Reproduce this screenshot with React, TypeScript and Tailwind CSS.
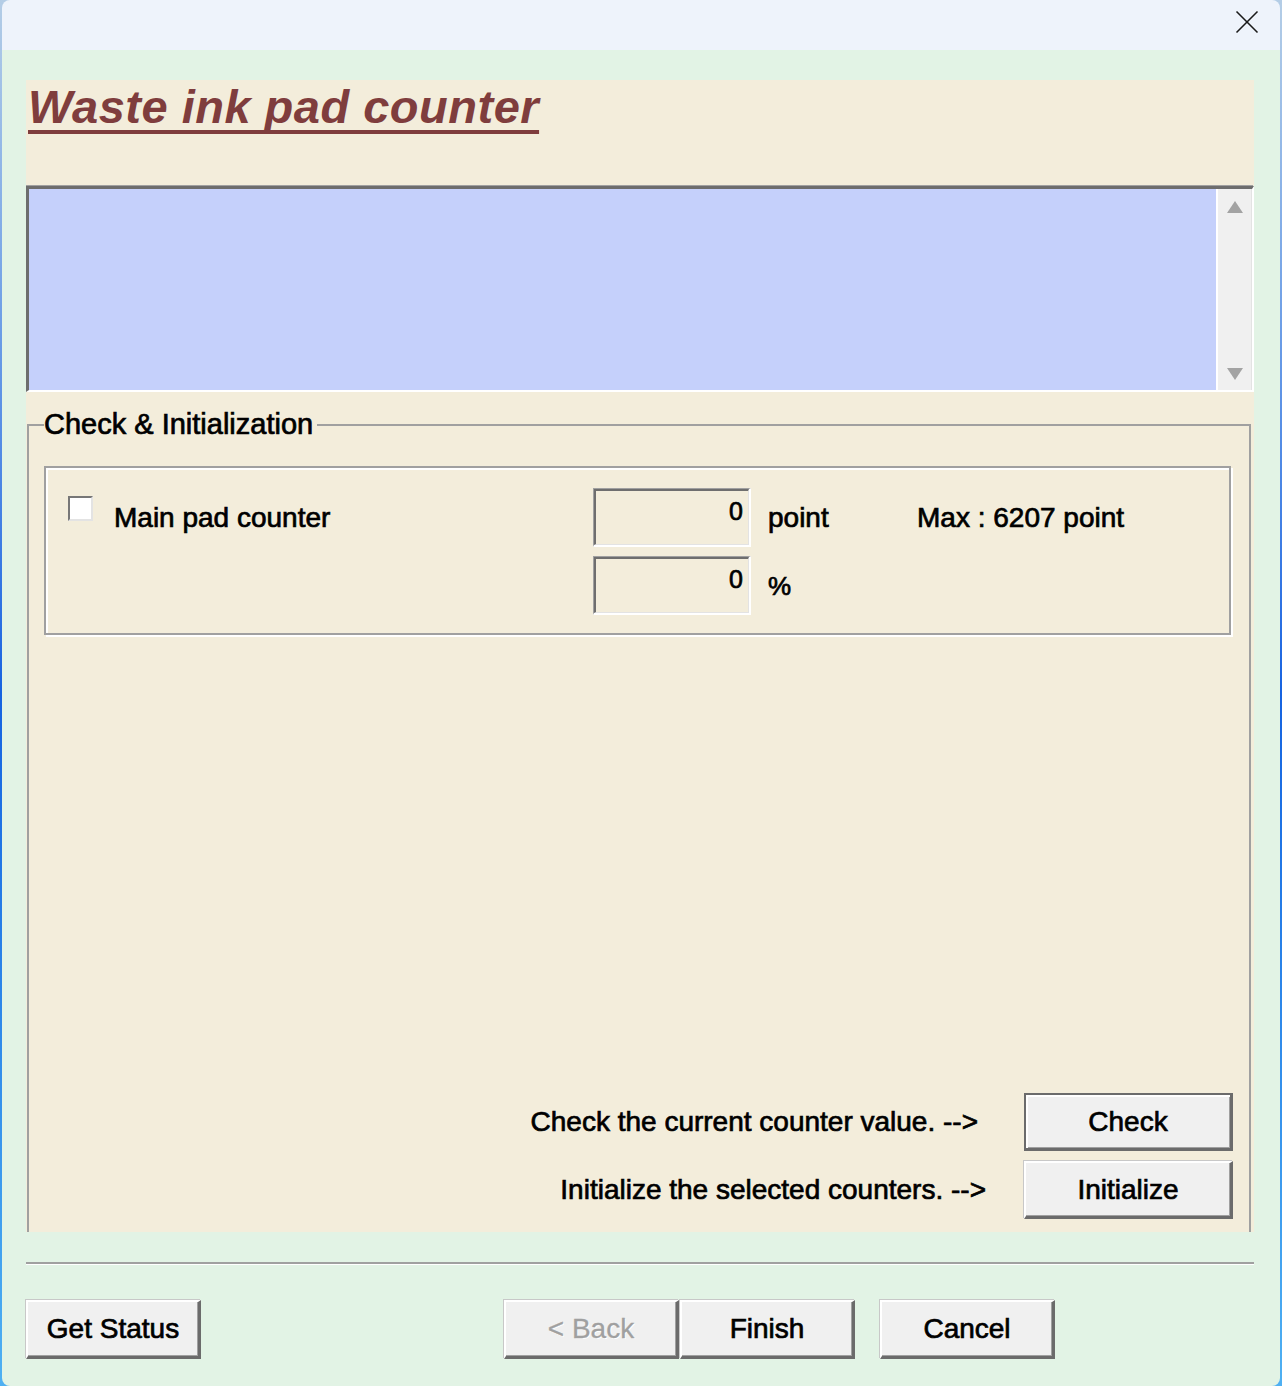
import React from "react";

const font = "font-['Liberation_Sans',Arial,sans-serif]";
const heavy = "[-webkit-text-stroke:0.7px_currentColor]";

function RaisedButton({
  label,
  width,
  height,
  disabled,
  isDefault,
}: {
  label: string;
  width: string;
  height: string;
  disabled?: boolean;
  isDefault?: boolean;
}) {
  const base =
    "flex items-center justify-center bg-[#f0f0f0] text-[28px] leading-[32px] " +
    width +
    " " +
    height;
  if (isDefault) {
    return (
      <div
        className={
          base +
          " border-t-[2px] border-l-[2px] border-b-[3px] border-r-[3px] border-[#6b6b6b] shadow-[inset_2px_2px_0_#ffffff,inset_-1px_-1px_0_#a0a0a0]"
        }
      >
        <span className={"text-black " + heavy}>{label}</span>
      </div>
    );
  }
  return (
    <div
      className={
        base +
        " border-t-[2px] border-l-[2px] border-t-white border-l-white border-b-[3px] border-r-[3px] border-b-[#6b6b6b] border-r-[#6b6b6b] shadow-[inset_-1px_-1px_0_#a0a0a0,-1px_-1px_0_#c8c8c8]"
      }
    >
      {disabled ? (
        <span className="text-[#a0a0a0] [text-shadow:1px_1px_0_#ffffff] [-webkit-text-stroke:0.3px_currentColor]">{label}</span>
      ) : (
        <span className={"text-black " + heavy}>{label}</span>
      )}
    </div>
  );
}

function SunkenField({ value }: { value: string }) {
  return (
    <div className="w-[158px] h-[59px] border-t border-l border-[#a0a0a0] border-b-[2px] border-r-[2px] border-b-white border-r-white">
      <div className="h-full border-t-[2px] border-l-[2px] border-[#6e6e6e] border-b border-r border-b-[#e3e3e3] border-r-[#e3e3e3] bg-[#f3eddb] flex justify-end pr-[5px] pt-[6px]">
        <span className={"text-[25px] leading-[29px] text-black " + heavy}>{value}</span>
      </div>
    </div>
  );
}

export default function App() {
  return (
    <div
      className={
        "w-[1282px] h-[1386px] flex px-[2px] bg-gradient-to-b from-[#b4cde6] via-[#1663e0] to-[#4fb0f2] " +
        font
      }
    >
      <div className="flex-1 flex flex-col rounded-[8px] overflow-hidden">
        {/* Title bar */}
        <div className="h-[50px] bg-[#eef3fb] flex items-center justify-end pr-[21px]">
          <svg width="24" height="24" viewBox="0 0 24 24" className="mt-[-6px]">
            <line x1="1.5" y1="1.5" x2="22.5" y2="22.5" stroke="#1a1a1a" strokeWidth="1.6" />
            <line x1="22.5" y1="1.5" x2="1.5" y2="22.5" stroke="#1a1a1a" strokeWidth="1.6" />
          </svg>
        </div>

        {/* Body */}
        <div className="flex-1 bg-[#e2f3e5] pl-[24px] pr-[26px] flex flex-col">
          <div className="mt-[30px] h-[1152px] overflow-hidden bg-[#f3eddb] flex flex-col">
            {/* Heading */}
            <div className="h-[106px] shrink-0 pl-[2px]">
              <span className="text-[47px] leading-[54px] font-bold italic tracking-[0.5px] text-[#7f3d3d] underline decoration-[4px] underline-offset-[7px] [text-decoration-skip-ink:none]">
                Waste ink pad counter
              </span>
            </div>

            {/* List box */}
            <div className="h-[206px] shrink-0 flex border-t-[3px] border-l-[3px] border-[#6d6d6d] border-b-[2px] border-r-[2px] border-b-white border-r-white shadow-[-1px_-1px_0_#a0a0a0]">
              <div className="flex-1 bg-[#c5d0fb]" />
              <div className="w-[36px] bg-[#f0f0f0] border-l-[2px] border-white border-r border-r-[#e3e3e3] flex flex-col items-center justify-between pt-[12px] pb-[10px]">
                <svg width="16" height="12" viewBox="0 0 16 12">
                  <polygon points="8,0 16,12 0,12" fill="#a3a3a3" />
                </svg>
                <svg width="16" height="12" viewBox="0 0 16 12">
                  <polygon points="0,0 16,0 8,12" fill="#a3a3a3" />
                </svg>
              </div>
            </div>

            {/* Group box */}
            <fieldset className="mt-[16px] ml-[1px] mr-[3px] border-2 border-[#a0a0a0] pl-[15px] pr-[16px] pt-[25px] pb-[40px] shrink-0">
              <legend className={"text-[29px] leading-[33px] text-black pr-[4px] " + heavy}>
                Check &amp; Initialization
              </legend>
              <div className="h-[753px] flex flex-col">
                {/* Counter box */}
                <div className="w-[1187px] h-[169px] border-2 border-[#a0a0a0] shadow-[inset_2px_2px_0_#ffffff,2px_2px_0_#ffffff] pt-[20px] flex">
                  <div className="w-[547px] flex items-start">
                    <div className="ml-[22px] mt-[8px] w-[25px] h-[25px] bg-white border-2 border-t-[#777777] border-l-[#777777] border-b-[#e3e3e3] border-r-[#e3e3e3]" />
                    <span className={"ml-[21px] mt-[14px] text-[28px] leading-[32px] text-black " + heavy}>
                      Main pad counter
                    </span>
                  </div>
                  <div className="flex flex-col gap-[9px]">
                    <SunkenField value="0" />
                    <SunkenField value="0" />
                  </div>
                  <div className="ml-[17px] flex flex-col">
                    <div className="h-[59px] pt-[14px] flex">
                      <span className={"w-[149px] text-[28px] leading-[32px] text-black " + heavy}>point</span>
                      <span className={"text-[28px] leading-[32px] text-black " + heavy}>Max : 6207 point</span>
                    </div>
                    <div className="mt-[9px] pt-[15px]">
                      <span className={"text-[26px] leading-[30px] text-black " + heavy}>%</span>
                    </div>
                  </div>
                </div>

                {/* Action rows */}
                <div className="mt-auto flex flex-col gap-[10px]">
                  <div className="flex items-center justify-end gap-[46px]">
                    <span className={"text-[28px] leading-[32px] text-black " + heavy}>
                      Check the current counter value. --&gt;
                    </span>
                    <RaisedButton label="Check" width="w-[209px]" height="h-[58px]" isDefault />
                  </div>
                  <div className="flex items-center justify-end gap-[38px]">
                    <span className={"text-[28px] leading-[32px] text-black " + heavy}>
                      Initialize the selected counters. --&gt;
                    </span>
                    <RaisedButton label="Initialize" width="w-[209px]" height="h-[58px]" />
                  </div>
                </div>
              </div>
            </fieldset>
          </div>

          {/* Separator */}
          <div className="mt-[30px] border-t-2 border-[#a0a0a0] border-b border-b-white" />

          {/* Bottom buttons */}
          <div className="mt-[35px] flex">
            <RaisedButton label="Get Status" width="w-[175px]" height="h-[59px]" />
            <div className="ml-[303px] flex gap-[1px]">
              <RaisedButton label="< Back" width="w-[175px]" height="h-[59px]" disabled />
              <RaisedButton label="Finish" width="w-[175px]" height="h-[59px]" />
            </div>
            <div className="ml-[25px]">
              <RaisedButton label="Cancel" width="w-[175px]" height="h-[59px]" />
            </div>
          </div>
        </div>
      </div>
    </div>
  );
}
